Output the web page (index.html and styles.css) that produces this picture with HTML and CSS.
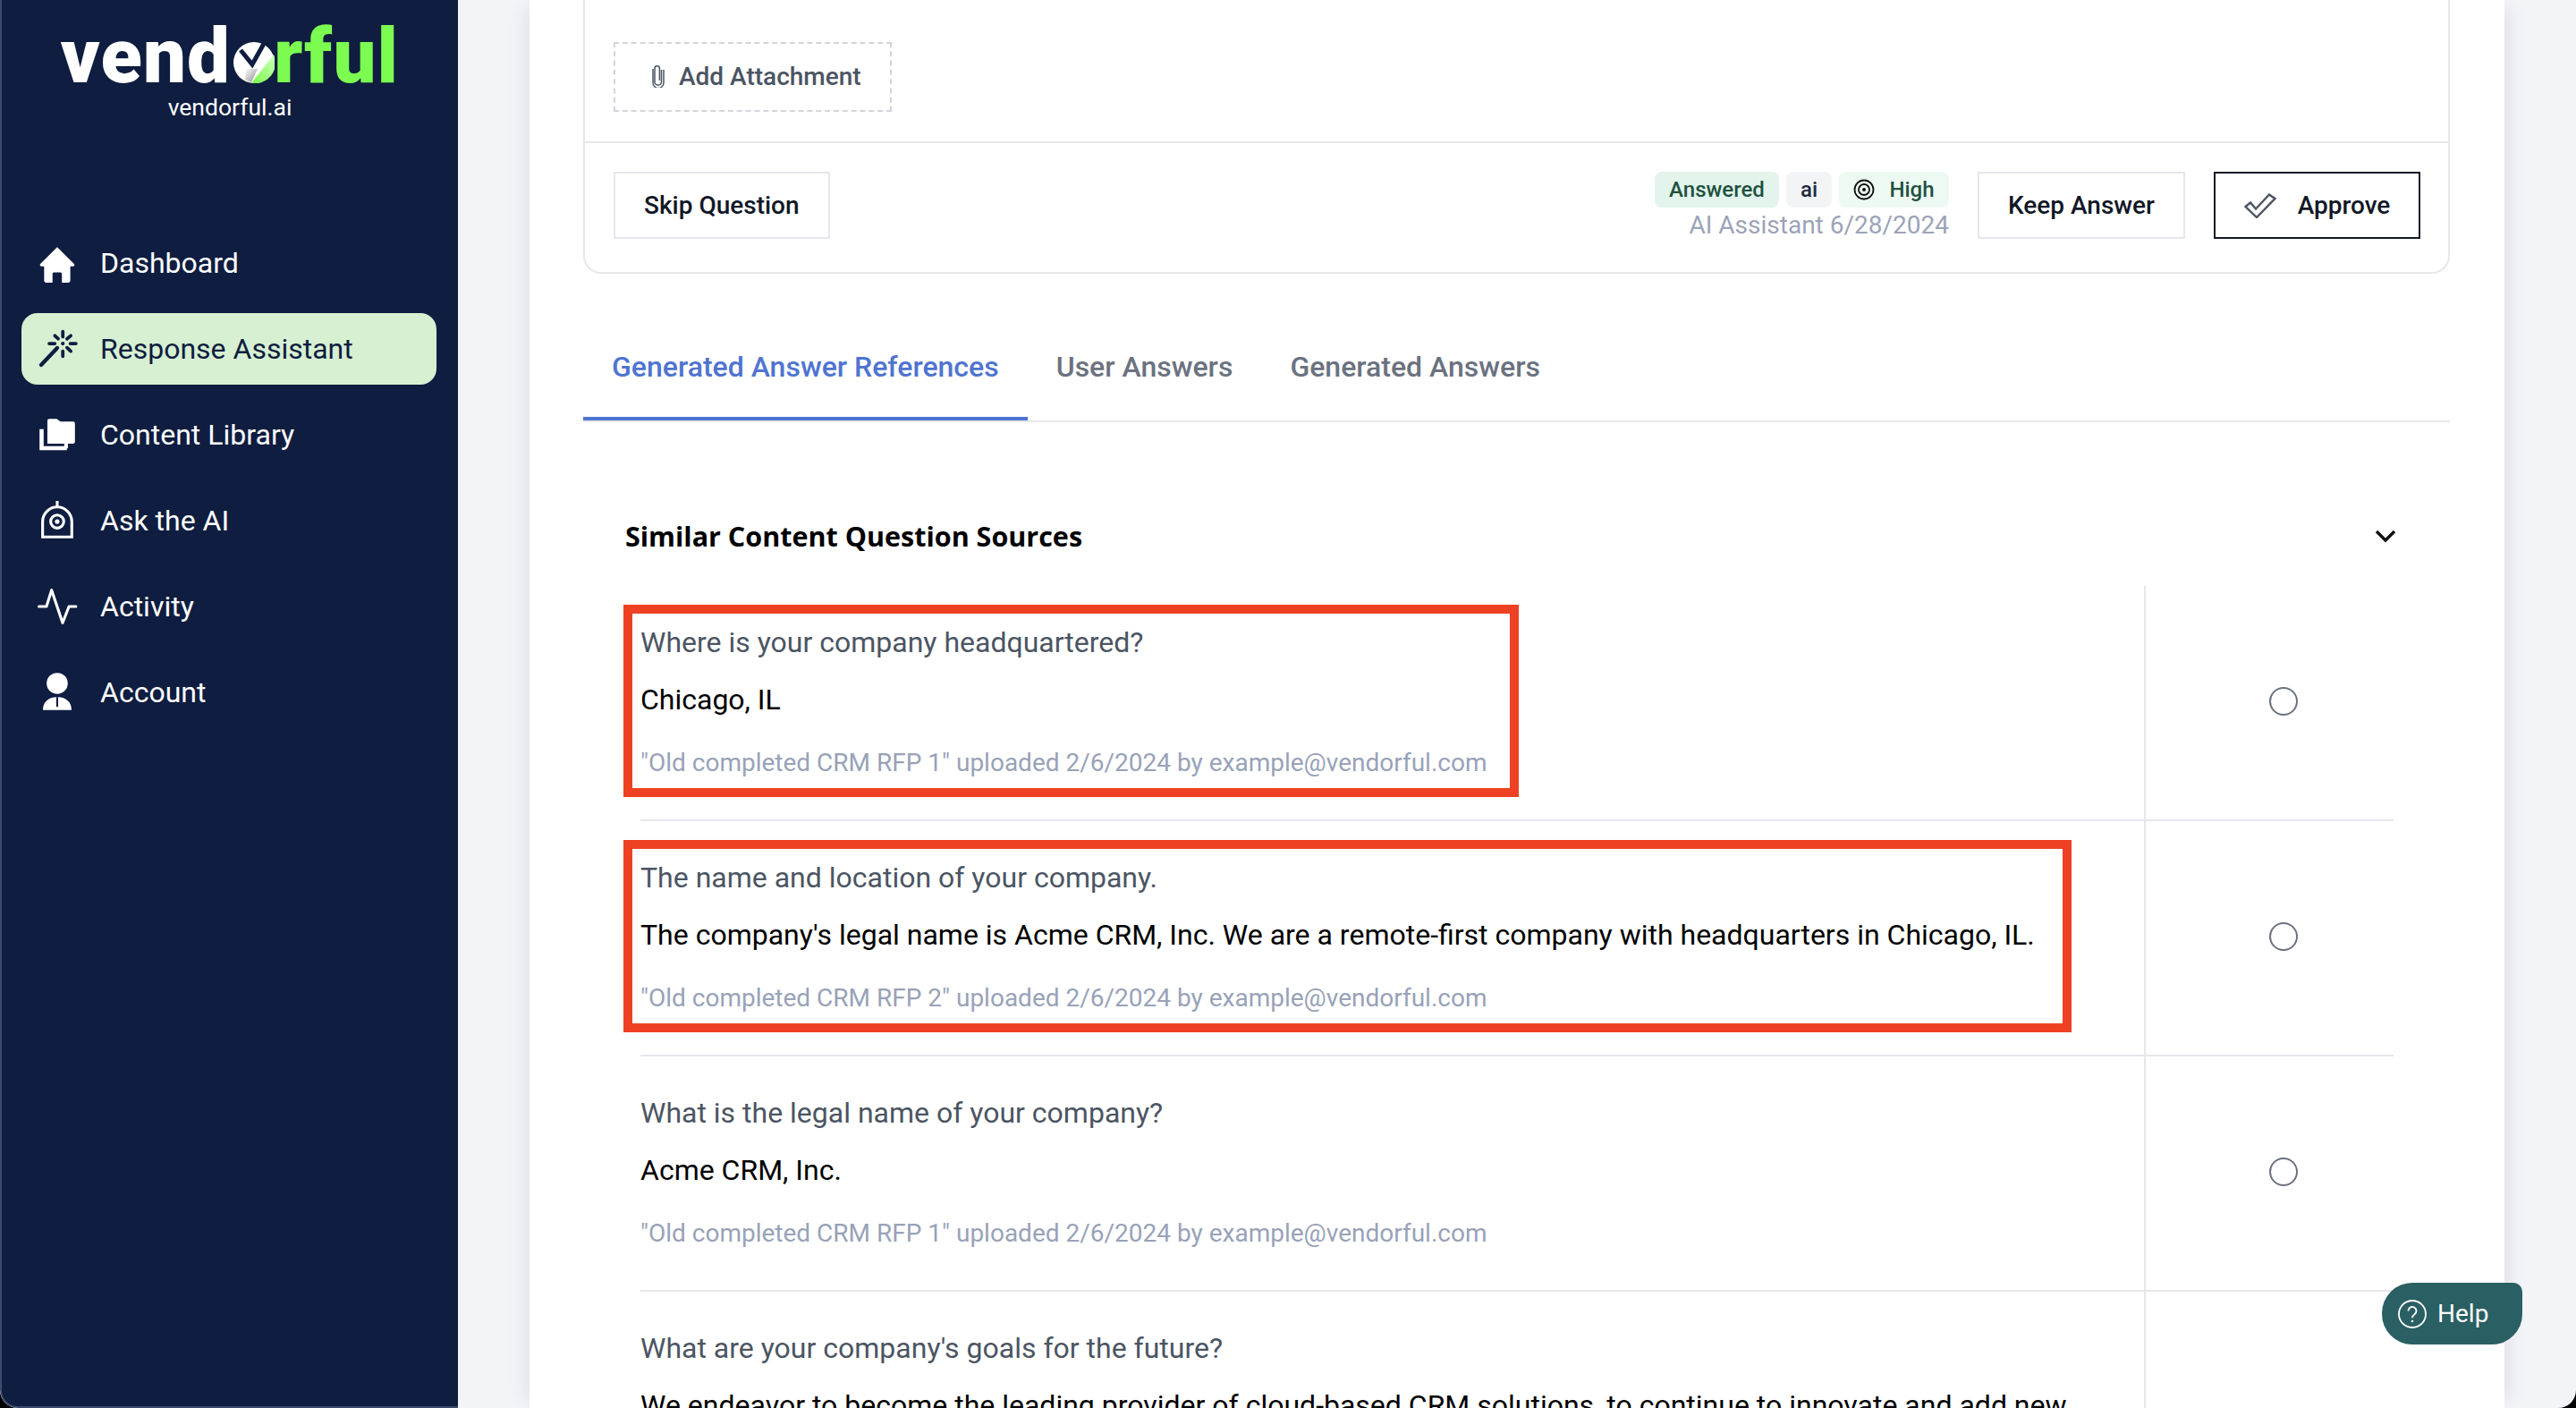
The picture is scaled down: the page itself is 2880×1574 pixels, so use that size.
FILE: index.html
```html
<!DOCTYPE html>
<html lang="en">
<head>
<meta charset="utf-8">
<title>Vendorful Response Assistant</title>
<link rel="stylesheet" href="styles.css">
</head>
<body>
<div class="app">
  <aside class="sidebar">
    <div class="brand">
      <div class="logo"><span>vend</span><svg class="logo-o" viewBox="0 0 46 46" aria-hidden="true"><defs><linearGradient id="og" x1="0.2" y1="1" x2="1" y2="0.2"><stop offset="0" stop-color="#7cfb50"/><stop offset="1" stop-color="#c8ffb5"/></linearGradient><linearGradient id="os" x1="0" y1="0" x2="1" y2="1"><stop offset="0" stop-color="#fff"/><stop offset="1" stop-color="#8a8a8a"/></linearGradient></defs><circle cx="23" cy="23" r="23" fill="#fff"/><path d="M20 46L45 14A23 23 0 0 1 20 46Z" fill="url(#og)"/><path d="M14 30L27 30L20 45Q16 44 13 42Z" fill="url(#os)"/><path d="M36 -1L46 16L45.500 14L35 1Z" fill="#0e1d40"/><path d="M8 9L21 25L35 0" fill="none" stroke="#0e1d40" stroke-width="5"/></svg><span class="logo-green">rful</span></div>
      <div class="domain">vendorful.ai</div>
    </div>
    <nav class="nav">
      <a class="nav-item"><svg class="nav-icon" viewBox="0 0 44 44"><path d="M21 5L38.800 22.800a1.500 1.500 0 0 1-1 2.700H35V41a2 2 0 0 1-2 2H26V33.500a1.500 1.500 0 0 0-1.500-1.500h-7a1.500 1.500 0 0 0-1.500 1.500V43H9a2 2 0 0 1-2-2V25.500H4.200a1.500 1.500 0 0 1-1-2.700Z" fill="#fff"/></svg><span>Dashboard</span></a>
      <a class="nav-item active"><svg class="nav-icon" viewBox="0 0 44 44"><g fill="none" stroke="#0e1d40" stroke-linecap="round"><path d="M3.800 39.200L21 21" stroke-width="4.200"/><path d="M27 3.500v5.500M27 24.500v5.500M12.500 16.300h6M35 16.300h6M18.500 8l3.500 3.200M35.500 8l-4 3.200M35.500 24.500l-4-3.800" stroke-width="3.600"/></g><circle cx="27" cy="16.300" r="2" fill="#0e1d40"/></svg><span>Response Assistant</span></a>
      <a class="nav-item"><svg class="nav-icon" viewBox="0 0 44 44"><path d="M10.500 7a2 2 0 0 1 2-2h8l4 3h13.500a2 2 0 0 1 2 2v19.500a2 2 0 0 1-2 2h-5.500v5h-4v-5H10.500Z" fill="#fff"/><path d="M4.300 16v20.300h27" fill="none" stroke="#fff" stroke-width="4.400"/></svg><span>Content Library</span></a>
      <a class="nav-item"><svg class="nav-icon" viewBox="0 0 44 44"><g fill="none" stroke="#fff" stroke-width="3"><path d="M21 1v6M5.400 39.500V23a15.600 15.600 0 0 1 31.200 0v16.500Z"/><circle cx="21" cy="23" r="7"/></g><circle cx="21" cy="23" r="2.500" fill="#fff"/></svg><span>Ask the AI</span></a>
      <a class="nav-item"><svg class="nav-icon" viewBox="0 0 44 44"><path d="M1.500 22h8L15 4.500 26.800 39.500 33.600 22H41" fill="none" stroke="#fff" stroke-width="3" stroke-linecap="round" stroke-linejoin="round"/></svg><span>Activity</span></a>
      <a class="nav-item"><svg class="nav-icon" viewBox="0 0 44 44"><circle cx="21" cy="12.400" r="11.300" fill="#fff"/><path d="M5.700 41c0-8 5-14 15.300-14s15.300 6 15.300 14Z" fill="#fff"/><path d="M20 27h2v10.500h-2Z" fill="#0e1d40"/></svg><span>Account</span></a>
    </nav>
  </aside>

  <main class="main">
    <div class="sheet">
      <section class="answer-card">
        <div class="attach-area">
          <button class="attach"><svg class="clip" viewBox="0 0 14 26"><path d="M10.500 6v14a3.800 3.800 0 0 1-7.500 0V4.500a2.700 2.700 0 0 1 5.400 0V18" fill="none" stroke="#4b5563" stroke-width="1.500"/><path d="M13 6v14.500a6 6 0 0 1-12 0V5" fill="none" stroke="#4b5563" stroke-width="1.500"/></svg>Add Attachment</button>
        </div>
        <div class="actions">
          <button class="btn">Skip Question</button>
          <div class="actions-right">
            <div class="status">
              <div class="badges">
                <span class="badge badge-answered">Answered</span>
                <span class="badge badge-ai">ai</span>
                <span class="badge badge-high"><svg class="target" viewBox="0 0 24 24"><g fill="none" stroke="#111" stroke-width="1.800"><circle cx="12" cy="12" r="10.500"/><circle cx="12" cy="12" r="6"/></g><circle cx="12" cy="12" r="2" fill="#111"/></svg>High</span>
              </div>
              <div class="author">AI Assistant 6/28/2024</div>
            </div>
            <button class="btn">Keep Answer</button>
            <button class="btn btn-dark"><svg class="check" viewBox="0 0 36 28"><path d="M1.500 15L7 10.500L13 17.500L28 1.500L34.500 6L14 27Z" fill="none" stroke="#4b5563" stroke-width="2.400"/></svg>Approve</button>
          </div>
        </div>
      </section>

      <div class="tabs">
        <a class="tab tab-active">Generated Answer References</a>
        <a class="tab">User Answers</a>
        <a class="tab">Generated Answers</a>
      </div>

      <div class="section-head">
        <h2>Similar Content Question Sources</h2>
        <svg class="chevron" viewBox="0 0 24 16"><path d="M2 3l10 10 10-10" fill="none" stroke="#111" stroke-width="3.400"/></svg>
      </div>

      <div class="rows">
        <div class="row">
          <div class="row-text">
            <p class="q">Where is your company headquartered?</p>
            <p class="a">Chicago, IL</p>
            <p class="meta">"Old completed CRM RFP 1" uploaded 2/6/2024 by example@vendorful.com</p>
            <div class="mark mark-short"></div>
          </div>
          <div class="row-pick"><span class="radio"></span></div>
        </div>
        <div class="row">
          <div class="row-text">
            <p class="q">The name and location of your company.</p>
            <p class="a">The company's legal name is Acme CRM, Inc. We are a remote-first company with headquarters in Chicago, IL.</p>
            <p class="meta">"Old completed CRM RFP 2" uploaded 2/6/2024 by example@vendorful.com</p>
            <div class="mark mark-long"></div>
          </div>
          <div class="row-pick"><span class="radio"></span></div>
        </div>
        <div class="row">
          <div class="row-text">
            <p class="q">What is the legal name of your company?</p>
            <p class="a">Acme CRM, Inc.</p>
            <p class="meta">"Old completed CRM RFP 1" uploaded 2/6/2024 by example@vendorful.com</p>
          </div>
          <div class="row-pick"><span class="radio"></span></div>
        </div>
        <div class="row row-tall">
          <div class="row-text">
            <p class="q">What are your company's goals for the future?</p>
            <p class="a">We endeavor to become the leading provider of cloud-based CRM solutions, to continue to innovate and add new</p>
          </div>
          <div class="row-pick"><span class="radio"></span></div>
        </div>
      </div>
    </div>
  </main>

  <button class="help"><svg class="help-icon" viewBox="0 0 32 32"><circle cx="16" cy="16" r="15" fill="none" stroke="#fff" stroke-width="1.800"/><path d="M11.500 12.500a4.500 4.500 0 1 1 7 3.700c-1.600 1.100-2.500 2-2.500 4" fill="none" stroke="#fff" stroke-width="1.900"/><circle cx="16" cy="24" r="1.300" fill="#fff"/></svg>Help</button>
</div>
</body>
</html>
```

FILE: styles.css
```css
* { box-sizing: border-box; }
html, body { margin: 0; height: 100%; overflow: hidden; }
body { font-family: Roboto, "Liberation Sans", sans-serif; background: #000; color: #000; }
p, h2 { margin: 0; }
button { font-family: inherit; cursor: pointer; background: #fff; }

.app { position: relative; display: flex; height: 1574px; overflow: hidden; background: #f3f4f8; border-radius: 0 0 20px 20px; }

.sidebar { width: 512px; flex: none; background: #0e1d40; border-left: 2px solid #3d4a6b; border-bottom: 2px solid #3d4a6b; border-radius: 0 0 0 20px; color: #fff; padding-left: 22px; padding-right: 24px; }
.brand { height: 254px; padding-top: 24px; margin-left: -22px; margin-right: -24px; display: flex; flex-direction: column; align-items: center; }
.logo { display: flex; align-items: baseline; font-size: 85px; font-weight: 900; line-height: 78px; color: #fff; letter-spacing: 1.2px; }
.logo-o { width: 46px; height: 46px; margin: 0 -1px 0 3px; transform: translateY(1px); }
.logo-green { color: #7cfb50; }
.domain { font-size: 26.5px; line-height: 36px; font-weight: 400; }

.nav { display: flex; flex-direction: column; gap: 16px; }
.nav-item { height: 80px; display: flex; align-items: center; padding-left: 18px; gap: 24px; font-size: 32px; border-radius: 18px; color: #fff; }
.nav-item.active { background: #d7f0d2; color: #0e1d40; }
.nav-icon { width: 46px; height: 46px; flex: none; }

.main { flex: 1; padding: 0 80px; min-width: 0; }
.sheet { background: #fff; height: 1574px; padding: 0 61px 0 60px; box-shadow: 14px 0 18px -8px rgba(20, 24, 60, 0.08), -14px 0 18px -8px rgba(20, 24, 60, 0.08); }

.answer-card { height: 306px; border: 2px solid #e5e7eb; border-top: 0; border-radius: 0 0 20px 20px; }
.attach-area { height: 160px; padding: 47px 0 0 32px; border-bottom: 2px solid #e5e7eb; }
.attach { display: flex; align-items: center; gap: 16px; width: 311px; height: 78px; padding: 0 0 2px 41px; border: 2px dashed #d1d5db; font-size: 28px; font-weight: 500; color: #4b5563; }
.clip { width: 14px; height: 26px; flex: none; }

.actions { display: flex; justify-content: space-between; padding: 32px 31px 0 32px; }
.actions-right { display: flex; gap: 32px; }
.btn { display: flex; align-items: center; justify-content: center; height: 75px; padding: 0 32px; border: 2px solid #e5e7eb; font-size: 28px; font-weight: 500; color: #111827; }
.btn-dark { border-color: #111827; gap: 24px; width: 231px; padding: 0; }
.check { width: 36px; height: 28px; flex: none; }

.status { display: flex; flex-direction: column; align-items: flex-end; }
.badges { display: flex; gap: 8px; }
.badge { display: flex; align-items: center; justify-content: center; height: 40px; border-radius: 8px; font-size: 24px; font-weight: 500; }
.badge-answered { width: 139px; background: #e2f4ec; color: #1f5140; }
.badge-ai { width: 51px; background: #f3f4f6; color: #1f2a44; }
.badge-high { width: 123px; background: #edfaf3; color: #1f5140; gap: 16px; }
.target { width: 24px; height: 24px; flex: none; }
.author { font-size: 28px; line-height: 40px; color: #9ca3b8; }

.tabs { display: flex; height: 166px; padding-top: 70px; border-bottom: 2px solid #e5e7eb; }
.tab { display: block; height: 94px; padding: 14px 32px 0; line-height: 40px; font-size: 32px; font-weight: 500; color: #6b7280; }
.tab-active { color: #4f74d0; border-bottom: 4px solid #4f74d0; }

.section-head { display: flex; align-items: center; justify-content: space-between; height: 183px; padding: 70px 60px 0 47px; }
.section-head h2 { font-family: "Open Sans", sans-serif; font-size: 30.5px; font-weight: 700; color: #000; }
.chevron { width: 24px; height: 16px; }

.rows { margin-left: 64px; margin-right: 63px; }
.row { display: flex; height: 263px; border-bottom: 2px solid #e5e7eb; }
.row-tall { height: 420px; }
.row-text { position: relative; flex: 1; padding-top: 39px; }
.q { font-size: 32px; line-height: 48px; color: #4b5563; }
.a { font-size: 32px; line-height: 48px; margin-top: 16px; color: #000; }
.meta { font-size: 28px; line-height: 40px; margin-top: 27px; color: #98a2b8; }
.row-pick { display: flex; align-items: center; width: 279px; flex: none; border-left: 2px solid #e5e7eb; padding: 0 0 3px 138px; }
.radio { display: block; width: 32px; height: 32px; border: 2px solid #6b7280; border-radius: 50%; }

.mark { position: absolute; top: 21px; left: -19px; height: 215px; border: 10px solid #ee4124; }
.mark-short { width: 1001px; }
.mark-long { width: 1619px; }

.help { position: absolute; left: 2663px; top: 1434px; width: 157px; height: 69px; display: flex; align-items: center; gap: 12px; padding: 0 0 0 18px; border: 0; border-radius: 34px 10px 34px 34px; background: #2a5f63; color: #fff; font-size: 28px; }
.help-icon { width: 32px; height: 32px; flex: none; }
```
